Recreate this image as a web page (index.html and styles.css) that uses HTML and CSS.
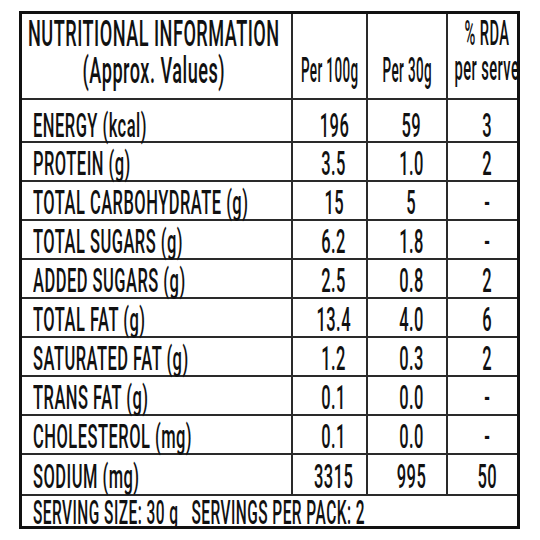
FILE: index.html
```html
<!DOCTYPE html>
<html lang="en">
<head>
<meta charset="utf-8">
<title>Nutritional Information</title>
<link rel="stylesheet" href="styles.css">
</head>
<body>
<div class="panel">
  <div class="cell head-title">
    <span class="t t-title">NUTRITIONAL INFORMATION<br>(Approx. Values)</span>
  </div>
  <div class="cell head-col"><span class="t t-head">Per 100g</span></div>
  <div class="cell head-col"><span class="t t-head">Per 30g</span></div>
  <div class="cell head-col rda">
    <span class="t t-head t-rda">% RDA<br>per serve</span>
  </div>

  <div class="cell lab first"><span class="t">ENERGY (kcal)</span></div>
  <div class="cell num first"><span class="t">196</span></div>
  <div class="cell num first"><span class="t">59</span></div>
  <div class="cell num first"><span class="t">3</span></div>

  <div class="cell lab"><span class="t">PROTEIN (g)</span></div>
  <div class="cell num"><span class="t">3.5</span></div>
  <div class="cell num"><span class="t">1.0</span></div>
  <div class="cell num"><span class="t">2</span></div>

  <div class="cell lab"><span class="t">TOTAL CARBOHYDRATE (g)</span></div>
  <div class="cell num"><span class="t">15</span></div>
  <div class="cell num"><span class="t">5</span></div>
  <div class="cell num"><span class="t">-</span></div>

  <div class="cell lab"><span class="t">TOTAL SUGARS (g)</span></div>
  <div class="cell num"><span class="t">6.2</span></div>
  <div class="cell num"><span class="t">1.8</span></div>
  <div class="cell num"><span class="t">-</span></div>

  <div class="cell lab"><span class="t">ADDED SUGARS (g)</span></div>
  <div class="cell num"><span class="t">2.5</span></div>
  <div class="cell num"><span class="t">0.8</span></div>
  <div class="cell num"><span class="t">2</span></div>

  <div class="cell lab"><span class="t">TOTAL FAT (g)</span></div>
  <div class="cell num"><span class="t">13.4</span></div>
  <div class="cell num"><span class="t">4.0</span></div>
  <div class="cell num"><span class="t">6</span></div>

  <div class="cell lab"><span class="t">SATURATED FAT (g)</span></div>
  <div class="cell num"><span class="t">1.2</span></div>
  <div class="cell num"><span class="t">0.3</span></div>
  <div class="cell num"><span class="t">2</span></div>

  <div class="cell lab"><span class="t">TRANS FAT (g)</span></div>
  <div class="cell num"><span class="t">0.1</span></div>
  <div class="cell num"><span class="t">0.0</span></div>
  <div class="cell num"><span class="t">-</span></div>

  <div class="cell lab"><span class="t">CHOLESTEROL (mg)</span></div>
  <div class="cell num"><span class="t">0.1</span></div>
  <div class="cell num"><span class="t">0.0</span></div>
  <div class="cell num"><span class="t">-</span></div>

  <div class="cell lab last"><span class="t">SODIUM (mg)</span></div>
  <div class="cell num last"><span class="t">3315</span></div>
  <div class="cell num last"><span class="t">995</span></div>
  <div class="cell num last"><span class="t">50</span></div>

  <div class="cell lab foot"><span class="t t-foot">SERVING SIZE: 30 g&nbsp;&nbsp;&nbsp;SERVINGS PER PACK: 2</span></div>
</div>
</body>
</html>
```
FILE: styles.css
```css
html, body {
  margin: 0;
  padding: 0;
  background: #fff;
}

body {
  padding: 11px 0 0 19px;
  font-family: Roboto, "Liberation Sans", sans-serif;
  color: #111;
}

.panel {
  width: 495px;
  border: 3px solid #111;
  background: #2a2a2a;
  display: grid;
  grid-template-columns: 269px 73px 78px 69px;
  grid-template-rows: 84px 41px repeat(8, 37px) 39px 30px;
  gap: 2px;
}

.cell {
  background: #fff;
  display: flex;
  align-items: center;
  min-width: 0;
  white-space: nowrap;
  padding-top: 2px;
}

.t {
  display: inline-block;
  font-size: 34px;
  font-weight: 500;
  letter-spacing: 1px;
  line-height: 1;
  transform: scaleX(0.485);
  transform-origin: left center;
}

.lab {
  padding-left: 11px;
}

.num {
  justify-content: center;
  padding-left: 9px;
}

.num .t {
  transform-origin: center center;
}

.first {
  padding-top: 8px;
}

.head-title {
  flex-direction: column;
  align-items: center;
  justify-content: flex-start;
  padding-top: 1px;
  padding-right: 5px;
}

.t-title {
  font-size: 37px;
  text-align: center;
  transform-origin: center center;
  transform: scaleX(0.49);
}

.head-col {
  flex-direction: column;
  justify-content: flex-end;
  align-items: center;
  padding-top: 0;
  padding-bottom: 10px;
}

.rda {
  justify-content: flex-start;
  padding-left: 8px;
  padding-top: 2px;
  padding-bottom: 0;
}

.t-head {
  font-size: 35px;
  text-align: center;
  transform-origin: center center;
  transform: scaleX(0.385);
}

.t-rda {
  transform: scaleX(0.42);
}

.foot {
  grid-column: 1 / -1;
  padding-top: 2px;
}

.t-foot {
  transform: scaleX(0.455);
}
```
